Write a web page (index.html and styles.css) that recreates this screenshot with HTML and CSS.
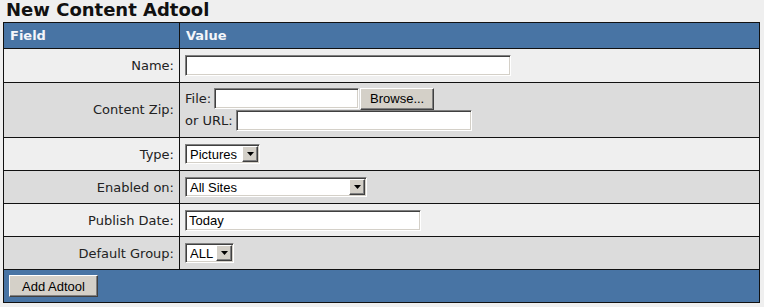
FILE: index.html
```html
<!DOCTYPE html>
<html lang="en">
<head>
    <meta charset="UTF-8">
    <title>New Content Adtool</title>
    <link rel="stylesheet" href="styles.css">
</head>
<body>
    <h2>New Content Adtool</h2>
    <form>
        <table class="form-table">
            <tr class="head">
                <th class="field">Field</th>
                <th>Value</th>
            </tr>
            <tr class="light first">
                <td class="label">Name:</td>
                <td><input type="text" class="txt name"></td>
            </tr>
            <tr class="dark zip">
                <td class="label">Content Zip:</td>
                <td>
                    <div class="line">File: <input type="text" class="txt file"><button type="button" class="btn browse">Browse...</button></div>
                    <div class="line">or URL: <input type="text" class="txt url"></div>
                </td>
            </tr>
            <tr class="light">
                <td class="label">Type:</td>
                <td>
                    <span class="combo type">
                        <select><option>Pictures</option></select>
                        <span class="arrow"><svg width="7" height="4" viewBox="0 0 7 4"><path d="M0 0h7L3.5 4z" fill="#000"/></svg></span>
                    </span>
                </td>
            </tr>
            <tr class="dark">
                <td class="label">Enabled on:</td>
                <td>
                    <span class="combo sites">
                        <select><option>All Sites</option></select>
                        <span class="arrow"><svg width="7" height="4" viewBox="0 0 7 4"><path d="M0 0h7L3.5 4z" fill="#000"/></svg></span>
                    </span>
                </td>
            </tr>
            <tr class="light">
                <td class="label">Publish Date:</td>
                <td><input type="text" class="txt date" value="Today"></td>
            </tr>
            <tr class="dark">
                <td class="label">Default Group:</td>
                <td>
                    <span class="combo group">
                        <select><option>ALL</option></select>
                        <span class="arrow"><svg width="7" height="4" viewBox="0 0 7 4"><path d="M0 0h7L3.5 4z" fill="#000"/></svg></span>
                    </span>
                </td>
            </tr>
            <tr class="foot">
                <td colspan="2"><button type="button" class="btn add">Add Adtool</button></td>
            </tr>
        </table>
    </form>
</body>
</html>
```

FILE: styles.css
```css
body {
    margin: 0;
    padding: 0 4px 0 3px;
    background: #efefef;
    font-family: "DejaVu Sans", Verdana, sans-serif;
    font-size: 13px;
    color: #222;
}

h2 {
    margin: 0;
    padding: 0 0 0 3px;
    height: 22px;
    line-height: 20px;
    font-size: 18px;
    font-weight: bold;
    color: #111;
}

.form-table {
    width: 757px;
    border-collapse: collapse;
    border: 1px solid #111;
}

.form-table th,
.form-table td {
    border: 1px solid #111;
    padding: 0 5px;
}

.head {
    height: 26px;
    background: #4874a4;
}

.head th {
    color: #f4f6fa;
    text-align: left;
    font-size: 13px;
    font-weight: bold;
    padding-left: 6px;
}

.form-table .field {
    width: 164px;
}

.light {
    height: 33px;
    background: #efefef;
}

.dark {
    height: 33px;
    background: #dcdcdc;
}

.first {
    height: 34px;
}

.zip td {
    padding-top: 5px;
    padding-bottom: 6px;
}

.zip .line + .line {
    margin-top: 1px;
}

.label {
    text-align: right;
    vertical-align: middle;
}

.line {
    display: flex;
    align-items: center;
    height: 21px;
    gap: 3px;
}

.txt {
    box-sizing: border-box;
    height: 21px;
    margin: 0;
    padding: 1px 3px;
    border: 1px solid;
    border-color: #808080 #fff #fff #808080;
    box-shadow: inset 1px 1px 0 #404040, inset -1px -1px 0 #d4d0c8;
    background: #fff;
    font-family: "Liberation Sans", Arial, sans-serif;
    font-size: 13px;
    color: #000;
    outline: none;
}

.name { width: 326px; }
.file { width: 145px; }
.url { width: 236px; }
.date { width: 236px; }

.btn {
    box-sizing: border-box;
    height: 22px;
    margin: 0;
    padding: 0 6px;
    border: 1px solid;
    border-color: #fff #404040 #404040 #fff;
    box-shadow: inset -1px -1px 0 #808080;
    background: #d4d0c8;
    font-family: "Liberation Sans", Arial, sans-serif;
    font-size: 13px;
    color: #000;
}

.browse {
    width: 74px;
    margin-left: -2px;
}

.add {
    width: 89px;
}

.combo {
    display: inline-flex;
    align-items: center;
    box-sizing: border-box;
    height: 20px;
    vertical-align: middle;
    border: 1px solid;
    border-color: #808080 #fff #fff #808080;
    box-shadow: inset 1px 1px 0 #404040, inset -1px -1px 0 #d4d0c8;
    background: #fff;
    padding: 1px 1px 1px 2px;
}

.combo select {
    appearance: none;
    -webkit-appearance: none;
    flex: 1;
    min-width: 0;
    border: none;
    background: transparent;
    padding: 0 2px;
    font-family: "Liberation Sans", Arial, sans-serif;
    font-size: 13px;
    color: #000;
    outline: none;
}

.arrow {
    box-sizing: border-box;
    width: 16px;
    height: 16px;
    display: flex;
    align-items: center;
    justify-content: center;
    border: 1px solid;
    border-color: #fff #404040 #404040 #fff;
    box-shadow: inset -1px -1px 0 #808080;
    background: #d4d0c8;
}

.type { width: 75px; }
.sites { width: 182px; }
.group { width: 49px; }

.foot {
    height: 33px;
    background: #4874a4;
}

.foot td {
    padding: 0 5px;
}
```
